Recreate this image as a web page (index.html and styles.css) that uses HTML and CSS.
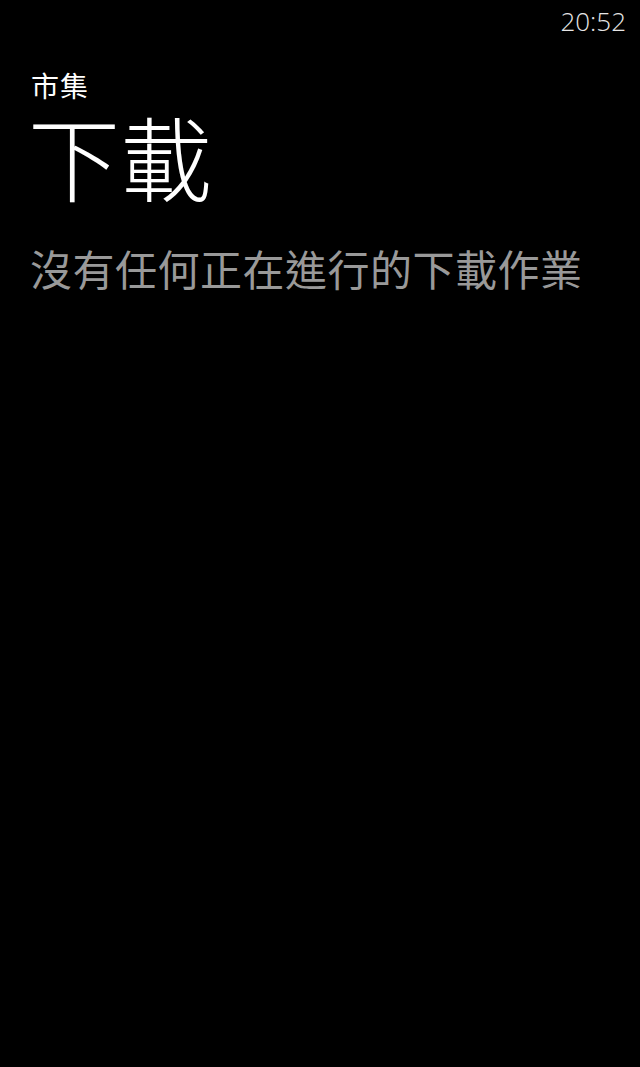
FILE: index.html
```html
<!DOCTYPE html>
<html lang="zh-Hant">
<head>
<meta charset="utf-8">
<title>市集 下載</title>
<link rel="stylesheet" href="styles.css">
</head>
<body>
<div class="status-bar"><span class="clock">20:52</span></div>
<main class="page">
  <div class="app-title">市集</div>
  <h1 class="page-title">下載</h1>
  <p class="empty-message">沒有任何正在進行的下載作業</p>
</main>
</body>
</html>
```
FILE: styles.css
```css
html, body {
  margin: 0;
  padding: 0;
  background: #000;
  height: 100%;
}
body {
  color: #fff;
  font-family: "Noto Sans CJK TC", "Noto Sans", sans-serif;
}
.status-bar {
  display: flex;
  justify-content: flex-end;
  padding: 8px 14px 0 0;
  height: 26px;
}
.clock {
  font-family: "Open Sans", "Noto Sans", sans-serif;
  font-weight: 300;
  font-size: 26px;
  line-height: 26px;
  color: #e6e6e6;
}
.page {
  display: flex;
  flex-direction: column;
  padding: 37px 0 0 31px;
}
.app-title {
  font-size: 28px;
  line-height: 28px;
  font-weight: 400;
  letter-spacing: 1px;
  color: #fff;
}
.page-title {
  margin: 10px 0 0 -3px;
  font-size: 92px;
  line-height: 92px;
  font-weight: 300;
  color: #fff;
}
.empty-message {
  margin: 46px 0 0 -1px;
  font-size: 42px;
  line-height: 42px;
  font-weight: 400;
  letter-spacing: 0.5px;
  color: #999;
}
```
